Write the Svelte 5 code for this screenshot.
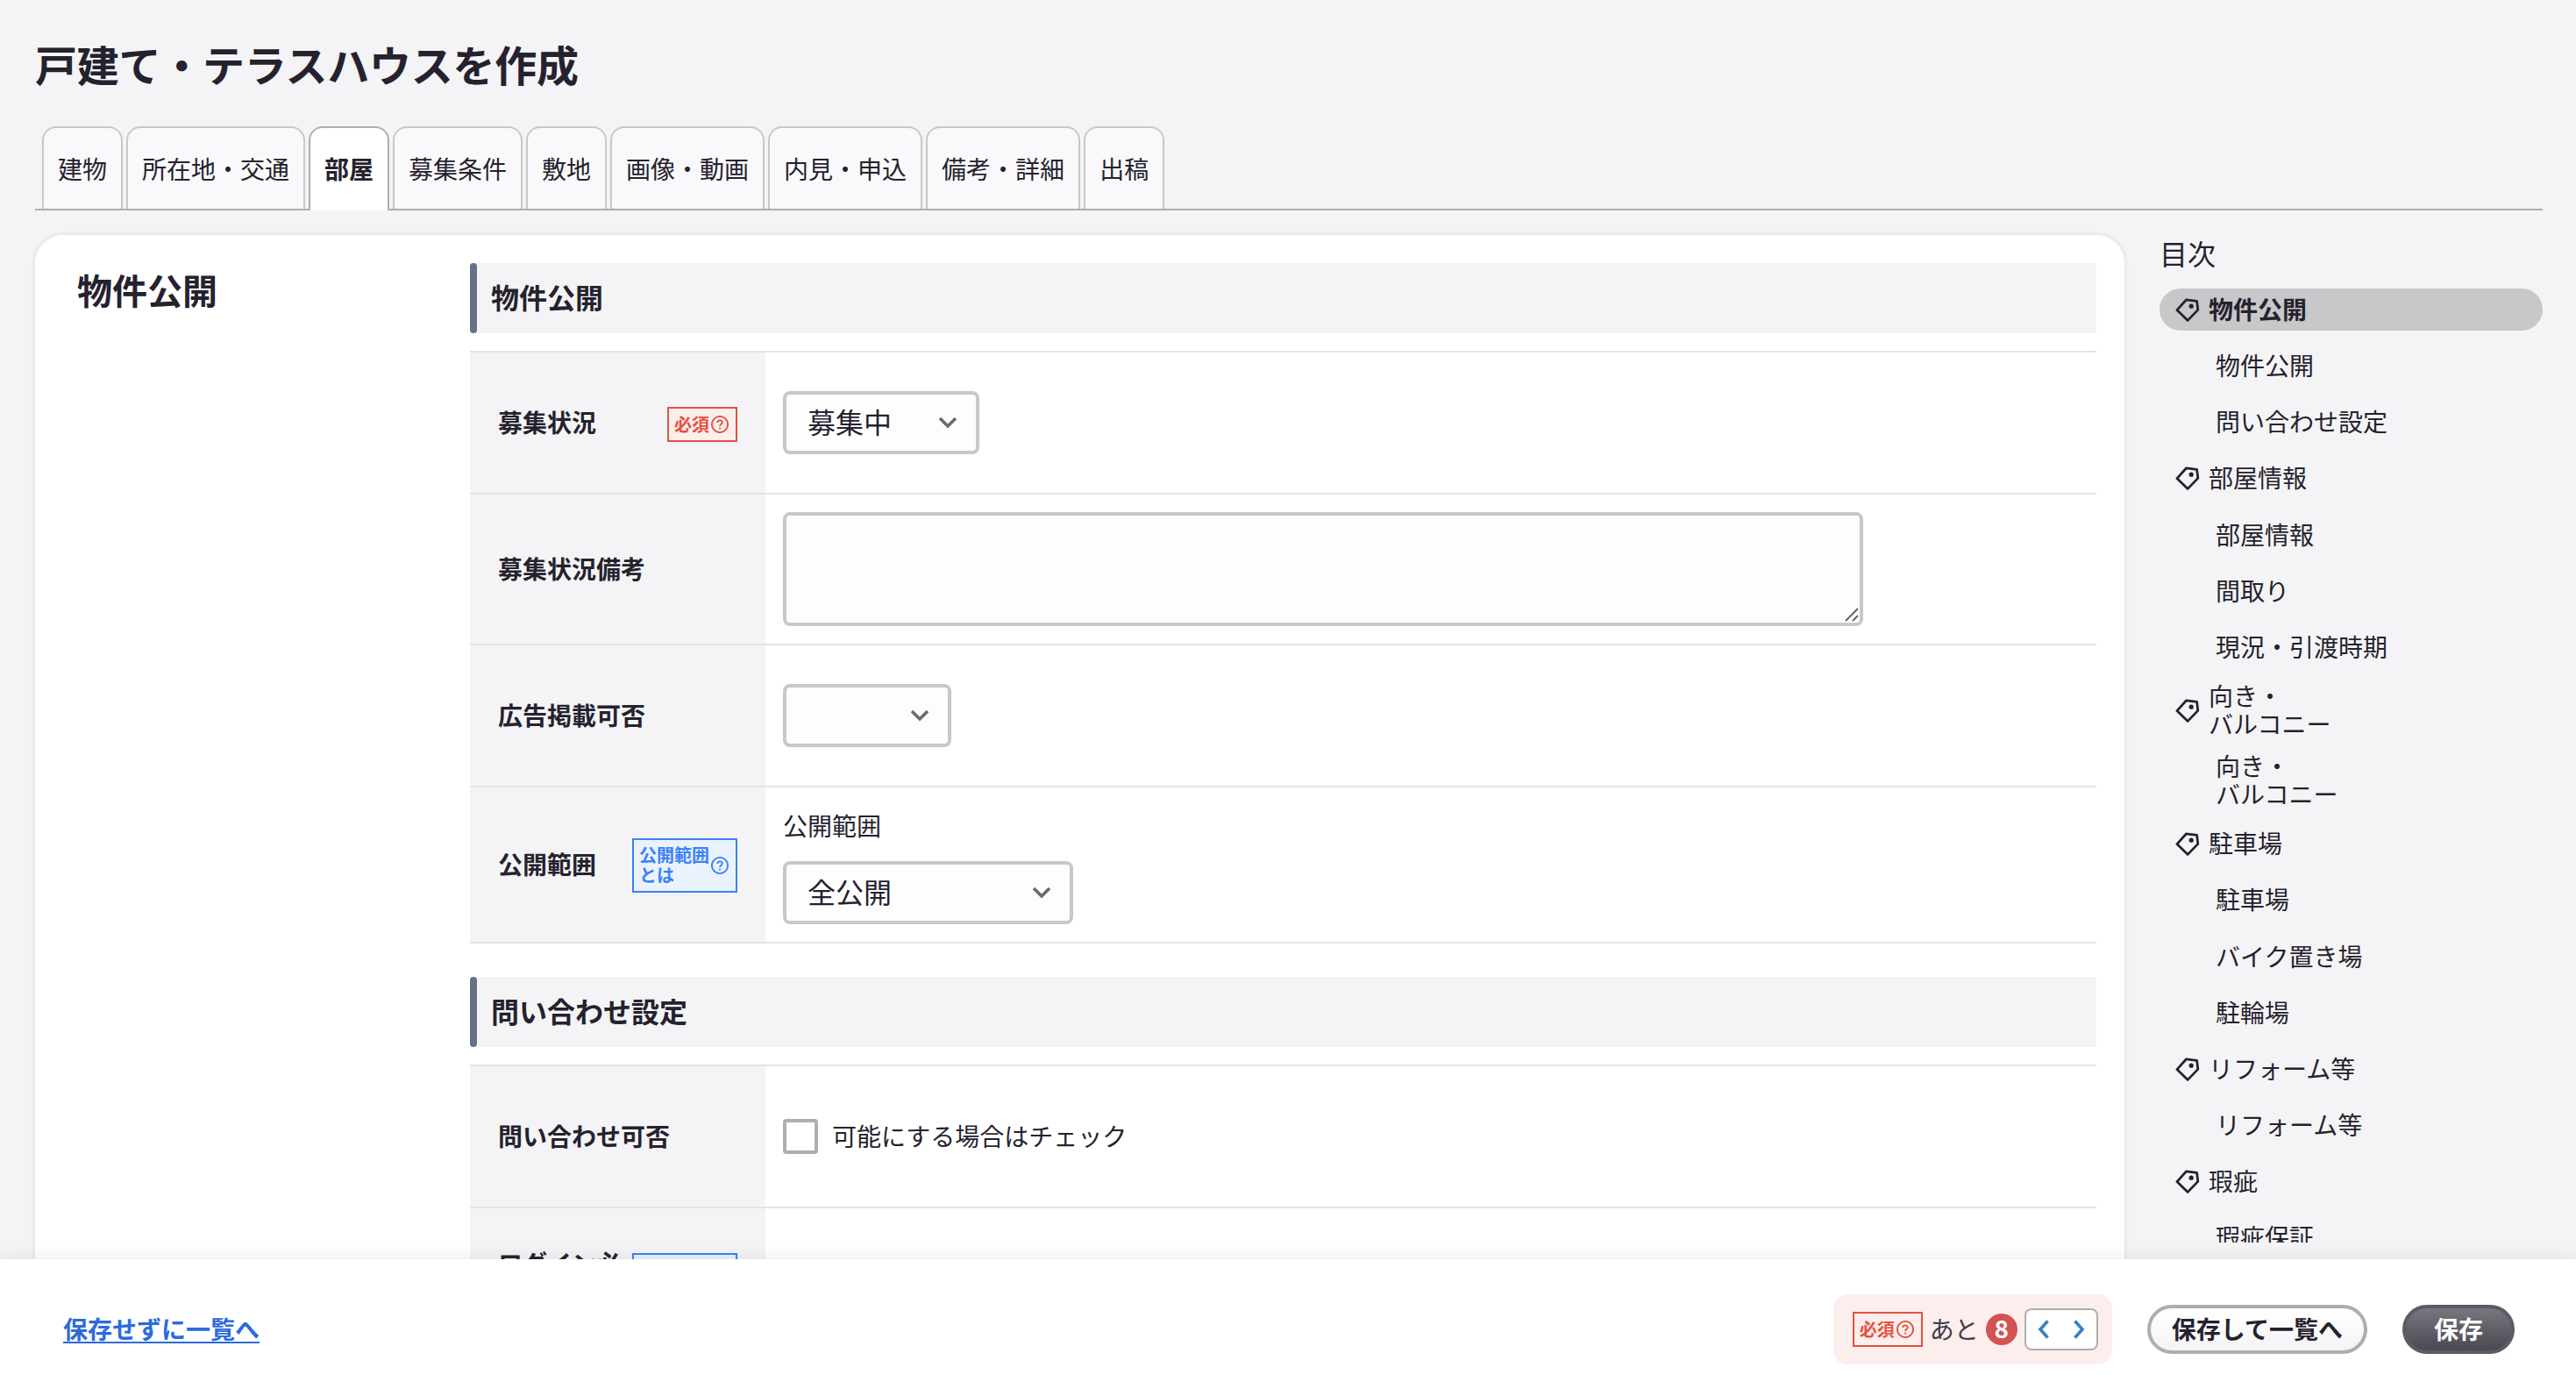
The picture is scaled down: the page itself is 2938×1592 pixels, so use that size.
<script>
	const tabs = ['建物', '所在地・交通', '部屋', '募集条件', '敷地', '画像・動画', '内見・申込', '備考・詳細', '出稿'];
	let activeTab = '部屋';

	const toc = [
		{ title: '物件公開', items: ['物件公開', '問い合わせ設定'] },
		{ title: '部屋情報', items: ['部屋情報', '間取り', '現況・引渡時期'] },
		{ title: '向き・\nバルコニー', items: ['向き・\nバルコニー'] },
		{ title: '駐車場', items: ['駐車場', 'バイク置き場', '駐輪場'] },
		{ title: 'リフォーム等', items: ['リフォーム等'] },
		{ title: '瑕疵', items: ['瑕疵保証'] }
	];
	let activeSection = '物件公開';

	let remaining = 8;
	let note = '';
	let canInquire = false;
</script>

{#snippet help()}
	<svg class="help" viewBox="0 0 20 20">
		<circle cx="10" cy="10" r="9.1" />
		<path d="M7.3 8c0-1.6 1.2-2.6 2.7-2.6s2.7 1 2.7 2.3c0 2-2.6 2-2.6 4.2" />
		<path d="M10.1 13.6v2" />
	</svg>
{/snippet}

{#snippet required()}
	<span class="badge required">必須{@render help()}</span>
{/snippet}

{#snippet chevron()}
	<svg class="chevron" viewBox="0 0 22 14"><path d="M2 2l9 9 9-9" /></svg>
{/snippet}

<div class="page">
	<h1>戸建て・テラスハウスを作成</h1>

	<nav class="tabs">
		{#each tabs as tab}
			<button class="tab" class:active={tab === activeTab} on:click={() => (activeTab = tab)}>{tab}</button>
		{/each}
	</nav>

	<div class="columns">
		<main class="card">
			<h2>物件公開</h2>
			<div class="sections">
				<section>
					<h3>物件公開</h3>
					<div class="table">
						<div class="row">
							<div class="label"><span>募集状況</span>{@render required()}</div>
							<div class="value">
								<div class="select">
									<select class="status"><option>募集中</option></select>
									{@render chevron()}
								</div>
							</div>
						</div>
						<div class="row note-row">
							<div class="label"><span>募集状況備考</span></div>
							<div class="value">
								<div class="note">
									<textarea bind:value={note}></textarea>
									<svg class="grip" viewBox="0 0 16 16"><path d="M1 15L15 1M9 15l6-6" /></svg>
								</div>
							</div>
						</div>
						<div class="row">
							<div class="label"><span>広告掲載可否</span></div>
							<div class="value">
								<div class="select">
									<select class="ad"><option></option></select>
									{@render chevron()}
								</div>
							</div>
						</div>
						<div class="row scope-row">
							<div class="label">
								<span>公開範囲</span>
								<span class="badge info"><span>公開範囲<br />とは</span>{@render help()}</span>
							</div>
							<div class="value">
								<p>公開範囲</p>
								<div class="select">
									<select class="scope"><option>全公開</option></select>
									{@render chevron()}
								</div>
							</div>
						</div>
					</div>
				</section>

				<section>
					<h3>問い合わせ設定</h3>
					<div class="table">
						<div class="row">
							<div class="label"><span>問い合わせ可否</span></div>
							<div class="value">
								<label class="check">
									<input type="checkbox" bind:checked={canInquire} />
									<span>可能にする場合はチェック</span>
								</label>
							</div>
						</div>
						<div class="row login-row">
							<div class="label">
								<span>ログイン必須</span>
								<span class="badge info"><span>ログイン<br />必須とは</span>{@render help()}</span>
							</div>
							<div class="value"></div>
						</div>
					</div>
				</section>
			</div>
		</main>

		<aside class="toc">
			<p class="toc-title">目次</p>
			<ul>
				{#each toc as group}
					<li class="toc-head" class:active={group.title === activeSection}>
						<svg class="tag" viewBox="0 0 28 28">
							<path d="M12.6 1.8L24.6 3.3L25.8 13.4L14.2 25.4L1.9 13.6Z" />
							<circle cx="18.2" cy="9.2" r="2.6" />
						</svg>
						<span>{group.title}</span>
					</li>
					{#each group.items as item}
						<li class="toc-item"><span>{item}</span></li>
					{/each}
				{/each}
			</ul>
		</aside>
	</div>

	<footer>
		<a class="back" href="#list">保存せずに一覧へ</a>
		<div class="remaining">
			{@render required()}
			<span class="after">あと</span>
			<span class="count">{remaining}</span>
			<div class="jump">
				<svg viewBox="0 0 14 22"><path d="M11.5 1.5L3 11l8.5 9.5" /></svg>
				<svg viewBox="0 0 14 22"><path d="M2.5 1.5L11 11l-8.5 9.5" /></svg>
			</div>
		</div>
		<button class="btn light">保存して一覧へ</button>
		<button class="btn dark">保存</button>
	</footer>
</div>

<style>
	:global(body) {
		background: #f4f4f6;
	}
	* {
		box-sizing: border-box;
		margin: 0;
	}
	.page {
		display: flex;
		flex-direction: column;
		width: 2938px;
		height: 1592px;
		overflow: hidden;
		color: #25222e;
		background: #f4f4f6;
		font-family: 'Noto Sans CJK JP', sans-serif;
		font-size: 28px;
		line-height: 32px;
	}
	button,
	select,
	textarea {
		font-family: inherit;
		color: inherit;
	}
	h1 {
		height: 144px;
		padding: 36px 40px 0;
		font-size: 48px;
		line-height: 72px;
		letter-spacing: -0.25px;
	}

	.tabs {
		display: flex;
		flex: none;
		gap: 4px;
		height: 96px;
		margin: 0 38px 0 40px;
		padding-left: 8px;
		box-shadow: inset 0 -2px #aeadb1;
	}
	.tab {
		height: 94px;
		padding: 0 16px;
		border: 2px solid #c8c8ca;
		border-bottom: 0;
		border-radius: 16px 16px 0 0;
		background: #f9f9fb;
		font-size: 28px;
		white-space: nowrap;
	}
	.tab.active {
		height: 96px;
		padding-bottom: 2px;
		border-color: #aeadb1;
		background: #fff;
		font-weight: bold;
	}

	.columns {
		display: flex;
		flex: 1;
		gap: 40px;
		min-height: 0;
		padding: 28px 38px 0 40px;
	}
	.card {
		display: flex;
		flex: 1;
		padding: 32px 32px 0 48px;
		border-radius: 32px 32px 0 0;
		background: #fff;
		box-shadow: 0 0 6px rgba(37, 34, 46, 0.12);
	}
	h2 {
		width: 448px;
		font-size: 40px;
		line-height: 60px;
	}
	.sections {
		flex: 1;
	}
	h3 {
		display: flex;
		gap: 16px;
		height: 80px;
		background: #f4f4f6;
		font-size: 32px;
		line-height: 77px;
	}
	h3::before {
		content: '';
		width: 8px;
		border-radius: 4px;
		background: #677089;
	}
	section + section {
		margin-top: 38px;
	}
	.table {
		margin-top: 20px;
		border-bottom: 2px solid #e4e4e5;
	}
	.row {
		display: flex;
		height: 162px;
		border-top: 2px solid #e4e4e5;
	}
	.note-row {
		height: 172px;
	}
	.scope-row {
		height: 178px;
	}
	.login-row {
		height: 163px;
	}
	.label {
		display: flex;
		align-items: center;
		justify-content: space-between;
		gap: 8px;
		width: 337px;
		padding: 0 32px;
		background: #f4f4f6;
		font-weight: bold;
	}
	.label > span:first-child {
		padding-bottom: 2px;
	}
	.login-row .label > span:first-child {
		line-height: 35px;
	}
	.value {
		display: flex;
		flex: 1;
		flex-direction: column;
		justify-content: center;
		align-items: flex-start;
		padding-left: 20px;
	}
	.scope-row .value {
		justify-content: flex-end;
		padding-bottom: 20px;
	}
	.value p {
		margin-bottom: 25px;
	}

	.badge {
		display: flex;
		flex: none;
		align-items: center;
		gap: 2px;
		border: 2px solid;
		font-size: 20px;
		font-weight: bold;
		line-height: 23px;
	}
	.badge.required {
		width: 80px;
		height: 40px;
		padding: 0 0 1px 6px;
		color: #e25241;
		background: #fdeeed;
	}
	.label .required {
		margin-top: 4px;
	}
	.badge.info {
		width: 120px;
		height: 62px;
		margin-top: 2px;
		padding-left: 6px;
		color: #3b82f6;
		background: #eaf2fe;
	}
	.badge.info > span {
		padding-bottom: 2px;
	}
	.help {
		width: 20px;
		height: 20px;
		fill: none;
		stroke: currentColor;
		stroke-width: 1.9;
	}

	.select,
	.note {
		position: relative;
		display: flex;
	}
	select {
		height: 72px;
		padding: 0 24px 5px;
		appearance: none;
		border: 4px solid #c8c8ca;
		border-radius: 8px;
		background: #fdfdfe;
		font-size: 32px;
	}
	.status {
		width: 224px;
	}
	.ad {
		width: 192px;
	}
	.scope {
		width: 331px;
	}
	.chevron {
		position: absolute;
		top: 29px;
		right: 25px;
		width: 22px;
		height: 14px;
		fill: none;
		stroke: #6b6a72;
		stroke-width: 3.6;
	}
	textarea {
		width: 1232px;
		height: 130px;
		padding: 16px;
		resize: none;
		border: 4px solid #c8c8ca;
		border-radius: 8px;
		background: #fdfdfe;
		font-size: 32px;
	}
	.grip {
		position: absolute;
		right: 5px;
		bottom: 5px;
		width: 16px;
		height: 16px;
		stroke: #5f5f63;
		stroke-width: 1.8;
	}
	.check {
		display: flex;
		align-items: center;
		gap: 16px;
	}
	.check span {
		padding-bottom: 2px;
	}
	.check input {
		width: 40px;
		height: 40px;
		appearance: none;
		border: 4px solid #aeadb1;
		border-radius: 4px;
		background: #fff;
	}

	.toc {
		width: 437px;
		height: 1149px;
		overflow: hidden;
	}
	.toc-title {
		height: 61px;
		font-size: 32px;
		line-height: 40px;
	}
	.toc ul {
		display: flex;
		flex-direction: column;
		gap: 16.15px;
		padding: 0;
		list-style: none;
	}
	.toc li {
		display: flex;
		flex: none;
		align-items: center;
		min-height: 48px;
		white-space: pre;
	}
	.toc li span {
		margin: -1px 0 1px;
	}
	.toc-head {
		gap: 10px;
		padding-left: 18px;
		border-radius: 24px;
	}
	.toc-head.active {
		background: #c8c8ca;
		font-weight: bold;
	}
	.toc-item {
		padding-left: 64px;
	}
	.tag {
		width: 28px;
		height: 28px;
		margin-top: 2px;
		fill: none;
		stroke: #25222e;
		stroke-width: 2.8;
		stroke-linejoin: round;
	}
	.tag circle {
		fill: #25222e;
		stroke: none;
	}

	footer {
		position: relative;
		display: flex;
		flex: none;
		align-items: center;
		gap: 40px;
		height: 156px;
		padding: 4px 70px 0 72px;
		background: #fff;
		box-shadow: 0 0 20px rgba(37, 34, 46, 0.1);
	}
	.back {
		margin: -2px auto 0 0;
		color: #2b6bdb;
		font-weight: bold;
		text-decoration: underline;
		text-decoration-thickness: 2px;
		text-decoration-skip-ink: none;
		text-underline-offset: 3px;
	}
	.remaining {
		display: flex;
		align-items: center;
		gap: 8px;
		width: 318px;
		height: 80px;
		padding-left: 22px;
		border-radius: 16px;
		background: #fceeed;
	}
	.after {
		padding-bottom: 2px;
		color: #3f3c47;
	}
	.count {
		width: 36px;
		height: 36px;
		border-radius: 50%;
		color: #fff;
		background: #d35352;
		font-weight: bold;
		line-height: 32px;
		text-align: center;
	}
	.jump {
		display: flex;
		align-items: center;
		justify-content: space-between;
		width: 84px;
		height: 48px;
		padding: 0 13px;
		border: 2px solid #aeadb1;
		border-radius: 8px;
		background: #fff;
	}
	.jump svg {
		width: 14px;
		height: 22px;
		fill: none;
		stroke: #3581c4;
		stroke-width: 3.6;
	}
	.btn {
		height: 56px;
		padding: 0 24px 2px;
		border: 4px solid #aeadb1;
		border-radius: 28px;
		font-size: 28px;
		font-weight: bold;
		line-height: 32px;
	}
	.light {
		background: linear-gradient(#fff, #f4f4f6);
	}
	.dark {
		padding: 0 32px 2px;
		border-color: #5c5a63;
		color: #fff;
		background: linear-gradient(#78767f, #4a4850);
	}
</style>
